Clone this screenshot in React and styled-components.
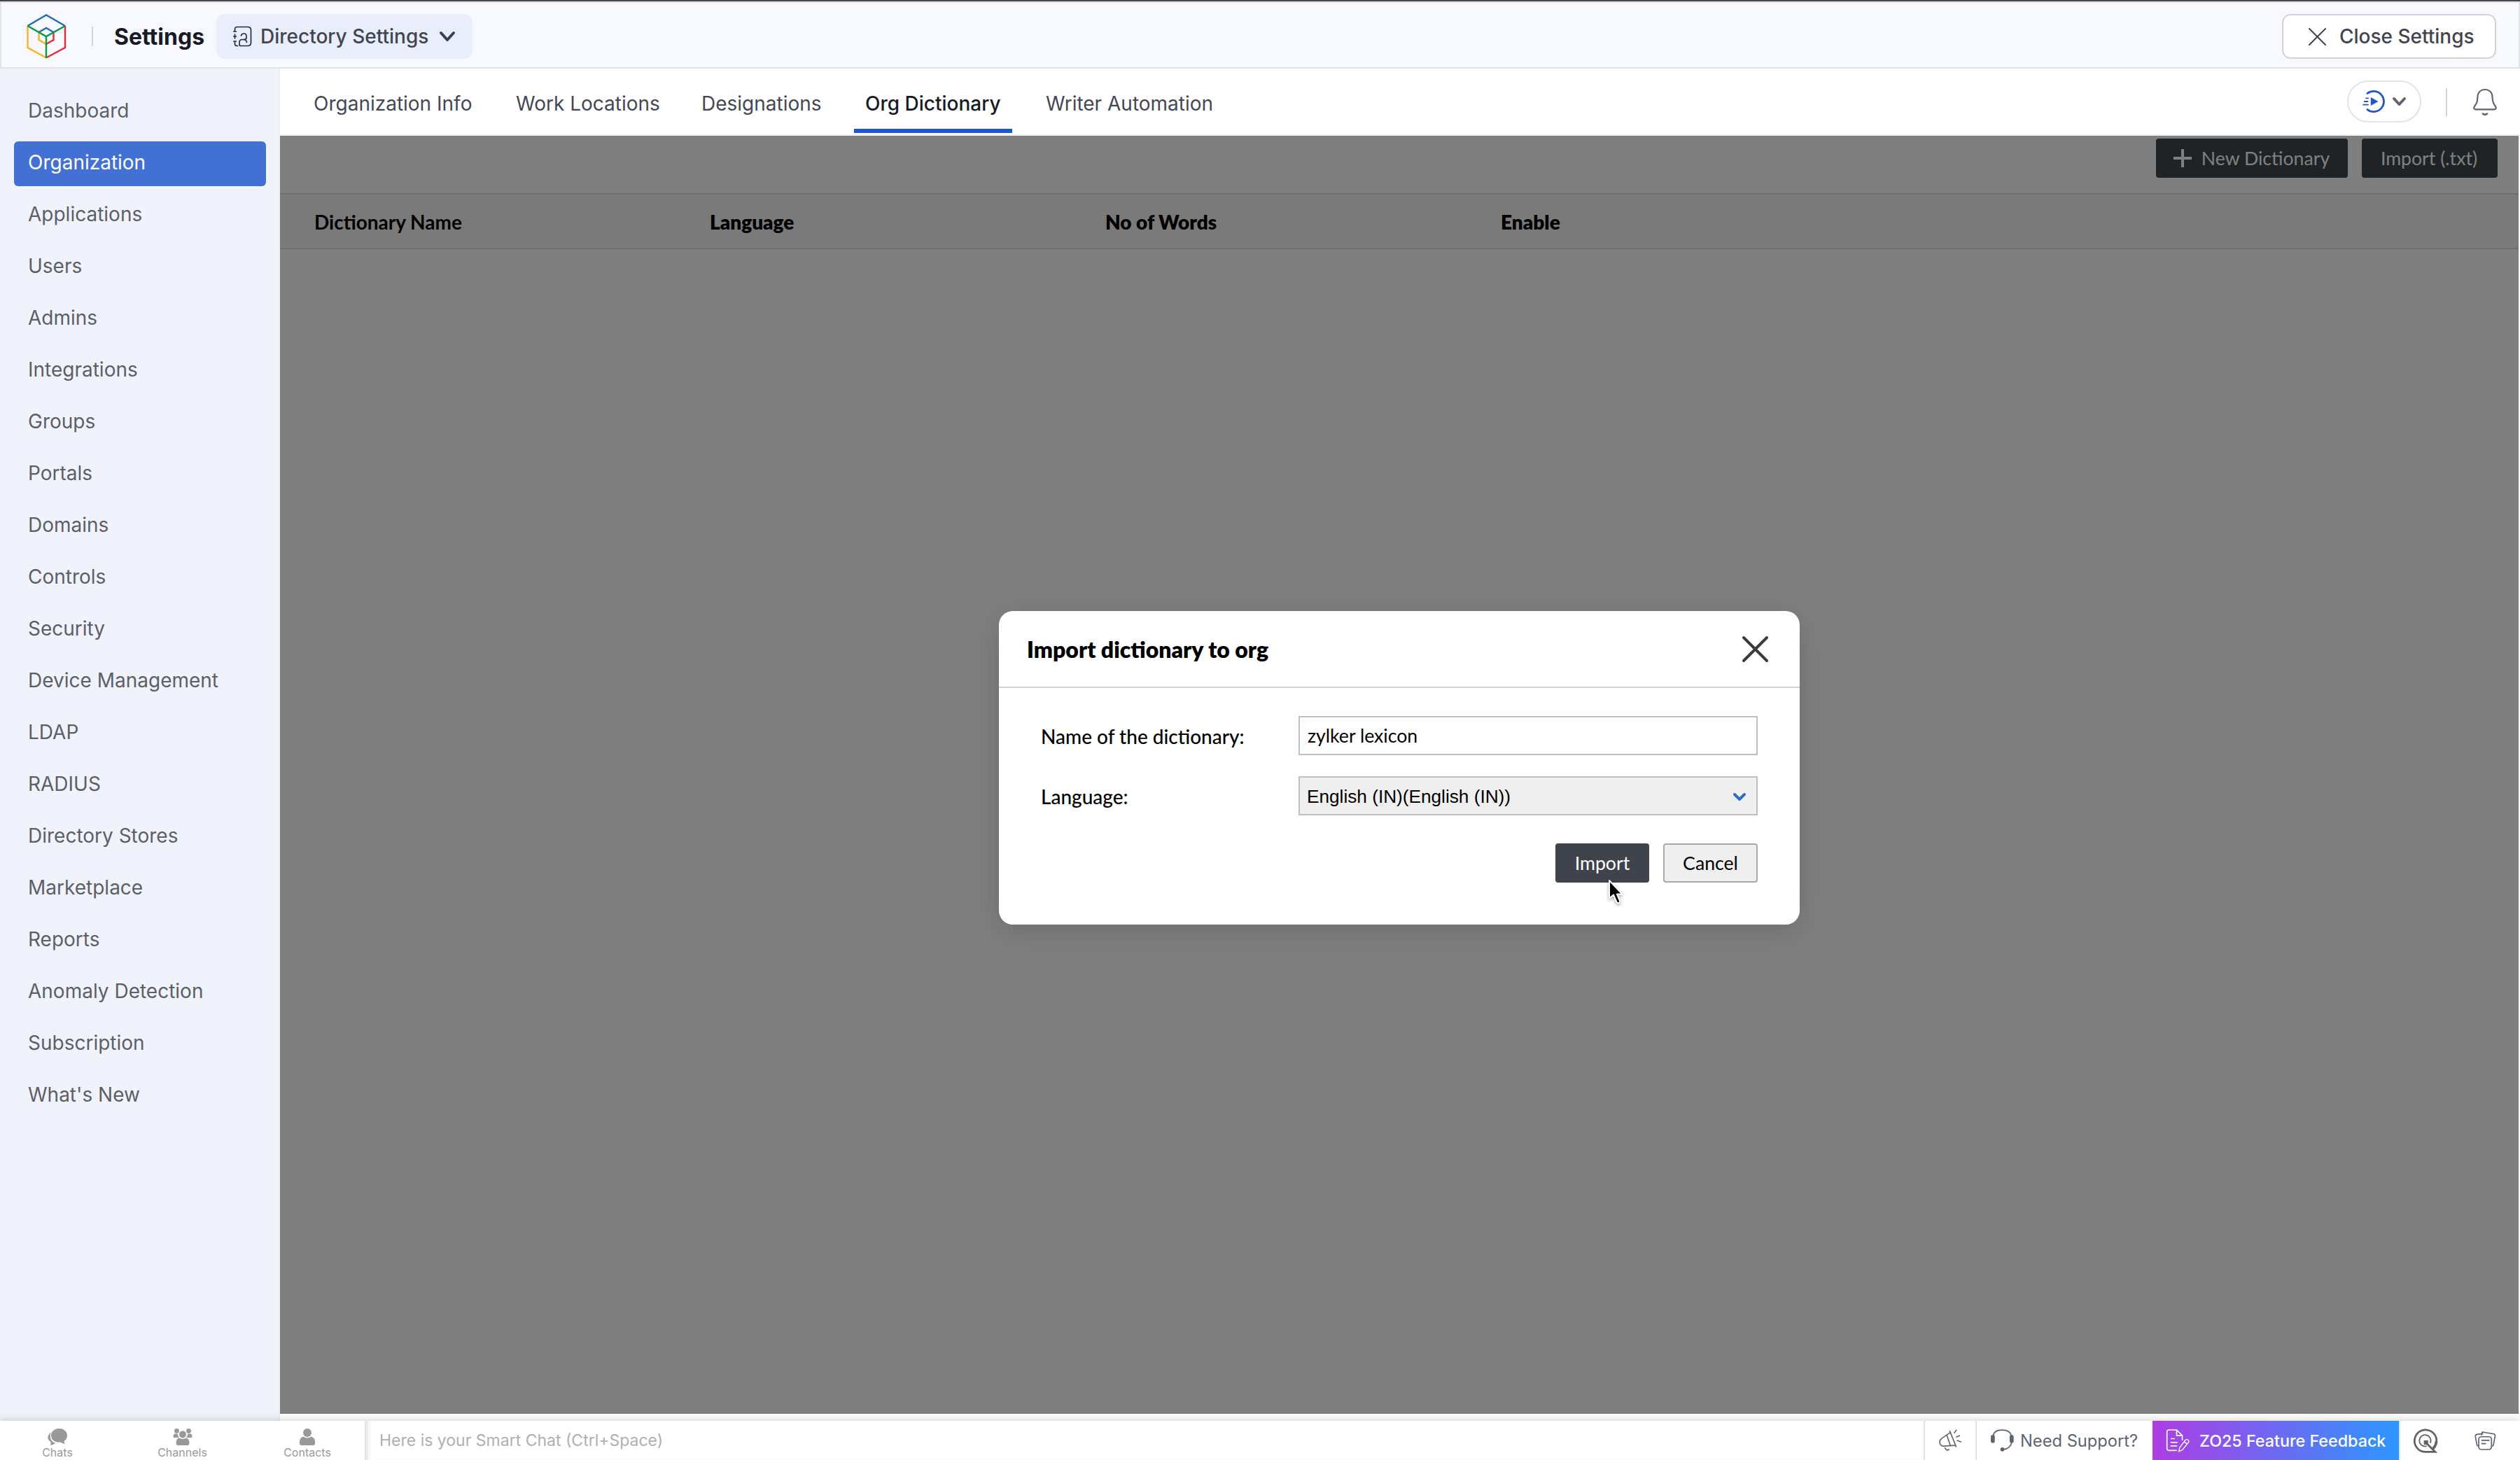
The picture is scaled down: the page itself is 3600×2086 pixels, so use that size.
import React, { useState } from 'react';
import styled, { createGlobalStyle, css } from "styled-components";

const GlobalStyle = createGlobalStyle`
  * { box-sizing: border-box; }
  body {
    margin: 0;
    background: #fff;
    font-family: Inter, "Liberation Sans", sans-serif;
  }
  button, input { font-family: inherit; margin: 0; }
  svg { display: block; flex: none; overflow: visible; }
`;

const Page = styled.div`
  width: 3600px;
  height: 2086px;
  display: flex;
  flex-direction: column;
  overflow: hidden;
  border-top: 2px solid #454545;
`;

// ---------- top bar ----------

const TopBar = styled.header`
  height: 96px;
  flex: none;
  display: flex;
  align-items: center;
  padding: 4px 32px 0 36px;
  background: #f8f9fe;
  border: 2px solid #e2e3e6;
`;

const TopDivider = styled.div`
  width: 2px;
  height: 28px;
  margin: 0 30px 0 37px;
  background: #d2d4da;
`;

const TopTitle = styled.h1`
  width: 146px;
  margin: 0;
  font-size: 32px;
  font-weight: 700;
  color: #171a26;
`;

const DirectoryButton = styled.button`
  width: 366px;
  height: 64px;
  display: flex;
  align-items: center;
  padding: 0 25px 0 24px;
  border: 0;
  border-radius: 12px;
  background: #e9eefa;
  font-size: 28px;
  font-weight: 500;
  color: #414552;

  span {
    flex: 1;
    margin-left: 12px;
    text-align: left;
    white-space: nowrap;
  }
`;

const CloseButton = styled.button`
  width: 306px;
  height: 64px;
  margin-left: auto;
  display: flex;
  align-items: center;
  gap: 19px;
  padding: 0 0 0 36px;
  border: 2px solid #d3d4d7;
  border-radius: 12px;
  background: #fff;
  font-size: 28px;
  font-weight: 500;
  color: #414552;
  white-space: nowrap;
`;

// ---------- sidebar ----------

const Body = styled.div`
  height: 1932px;
  flex: none;
  display: flex;
`;

const Sidebar = styled.nav`
  width: 400px;
  display: flex;
  flex-direction: column;
  gap: 10px;
  padding: 30px 18px 0 20px;
  background: #f0f3fc;
  border-right: 2px solid #efeff1;
`;

const SideItem = styled.div`
  height: 64px;
  flex: none;
  display: flex;
  align-items: center;
  padding: 0 0 4px 20px;
  border-radius: 6px;
  font-size: 28px;
  color: #5d5f67;
  cursor: pointer;
  ${(p) => p.$active && css`
    background: #4370d4;
    color: #fff;
  `}
`;

// ---------- content ----------

const Main = styled.main`
  flex: 1;
  display: flex;
  flex-direction: column;
`;

const TabBar = styled.div`
  height: 96px;
  flex: none;
  display: flex;
  gap: 32px;
  padding: 0 33px 0 32px;
  background: #fff;
  border-bottom: 2px solid #eeeeee;
`;

const Tab = styled.div`
  width: ${(p) => p.$width}px;
  height: 92px;
  display: flex;
  align-items: center;
  padding: 14px 0 0 16px;
  border-bottom: 6px solid ${(p) => (p.$active ? '#1d57cb' : 'transparent')};
  font-size: 28px;
  font-weight: ${(p) => (p.$active ? 500 : 400)};
  color: ${(p) => (p.$active ? '#171a26' : '#434857')};
  white-space: nowrap;
`;

const TabTools = styled.div`
  margin-left: auto;
  height: 94px;
  display: flex;
  align-items: center;
`;

const PlayPill = styled.button`
  width: 106px;
  height: 60px;
  display: flex;
  align-items: center;
  gap: 11px;
  padding: 0 0 0 20px;
  border: 2px solid #e3e4e6;
  border-radius: 30px;
  background: #fff;
`;

const ToolDivider = styled.div`
  width: 2px;
  height: 40px;
  margin: 2px 37px 0 35px;
  background: #d2d3d6;
`;

const Workspace = styled.section`
  position: relative;
  width: 3198px;
  height: 1826px;
  flex: none;
  background: #fff;
`;

const Actions = styled.div`
  height: 82px;
  display: flex;
  justify-content: flex-end;
  gap: 20px;
  padding: 4px 30px 0 0;
`;

const ActionButton = styled.button`
  width: ${(p) => p.$width}px;
  height: 56px;
  display: flex;
  align-items: center;
  justify-content: center;
  gap: 13px;
  padding: 0 2px 0 0;
  border: 0;
  border-radius: 4px;
  background: #3f474c;
  font-family: Lato, sans-serif;
  font-size: 26.67px;
  color: #fff;
  white-space: nowrap;
`;

const TableHead = styled.div`
  height: 80px;
  display: grid;
  grid-template-columns: repeat(5, 565px);
  align-items: center;
  padding: 2px 0 0 49px;
  overflow: hidden;
  background: #f4f4f4;
  border-top: 2px solid #dfdfdf;
  border-bottom: 2px solid #dfdfdf;
  font-family: Lato, sans-serif;
  font-size: 28px;
  color: #000;
`;

const HeadCell = styled.div`
  font-weight: ${(p) => (p.$light ? 700 : 800)};
`;

// ---------- dialog ----------

const Overlay = styled.div`
  position: absolute;
  inset: 0;
  display: flex;
  align-items: center;
  justify-content: center;
  padding-bottom: 20px;
  background: rgba(0, 0, 0, 0.502);
`;

const Dialog = styled.div`
  width: 1144px;
  height: 448px;
  border-radius: 20px;
  background: #fff;
  box-shadow: 0 10px 40px rgba(0, 0, 0, 0.14);
  font-family: Lato, sans-serif;
  color: #000;
`;

const DialogHeader = styled.div`
  height: 110px;
  display: flex;
  align-items: center;
  justify-content: space-between;
  padding: 0 46px 0 40px;
  border-bottom: 2px solid #d2d2d2;

  h2 {
    margin: 0;
    font-size: 32px;
    font-weight: 800;
  }
`;

const DialogBody = styled.div`
  display: flex;
  flex-direction: column;
  gap: 30px;
  padding: 40px 60px 0 60px;
`;

const FormRow = styled.label`
  height: 56px;
  display: flex;
  align-items: center;
  justify-content: space-between;
  font-size: 28px;
  font-weight: 500;

  > span {
    padding-top: 2px;
  }
`;

const field = css`
  width: 656px;
  height: 56px;
  border: 2px solid #bfbfbf;
  color: #000;
`;

const TextField = styled.input`
  ${field}
  padding: 0 11px;
  border-radius: 0;
  outline: 0;
  background: #fff;
  font-family: Lato, sans-serif;
  font-size: 26.67px;
`;

const SelectField = styled.div`
  ${field}
  display: flex;
  align-items: center;
  justify-content: space-between;
  padding: 2px 15px 0 10px;
  background: #efefef;
  font-family: "Liberation Sans", Arial, sans-serif;
  font-size: 26.2px;
  font-weight: 400;
`;

const DialogActions = styled.div`
  display: flex;
  justify-content: flex-end;
  gap: 20px;
  margin-top: 10px;
`;

const DialogButton = styled.button`
  position: relative;
  width: ${(p) => (p.$primary ? 134 : 135)}px;
  height: 56px;
  padding: 0;
  border: ${(p) => (p.$primary ? '0' : '2px solid #a9a9a9')};
  border-radius: 4px;
  background: ${(p) => (p.$primary ? '#3f444c' : '#efefef')};
  color: ${(p) => (p.$primary ? '#fff' : '#000')};
  font-family: Lato, sans-serif;
  font-size: 26.67px;
`;

const Cursor = styled.svg`
  position: absolute;
  left: 75px;
  top: 51px;
  filter: drop-shadow(0 2px 2px rgba(0, 0, 0, 0.35));
`;

// ---------- bottom bar ----------

const BottomBar = styled.footer`
  position: relative;
  height: 56px;
  flex: none;
  display: flex;
  background: #fff;
  box-shadow: 0 0 12px rgba(0, 0, 0, 0.2);
`;

const ChatTabs = styled.div`
  width: 521px;
  display: flex;
  gap: 106.5px;
  padding: 11px 0 0 46px;
`;

const ChatTab = styled.div`
  width: 72px;
  flex: none;
  display: flex;
  flex-direction: column;
  align-items: center;
  gap: 2px;
  font-size: 16px;
  line-height: 16px;
  color: #999;
`;

const SmartChat = styled.div`
  flex: 1;
  display: flex;
  align-items: center;
  padding-left: 21px;
  box-shadow: inset 8px 0 6px -4px rgba(0, 0, 0, 0.13);
  font-size: 23px;
  color: #b0b0b0;
`;

const BarCell = styled.div`
  width: ${(p) => p.$width}px;
  display: flex;
  align-items: center;
  padding-left: ${(p) => p.$pad}px;
  border-left: 2px solid ${(p) => (p.$line ? '#e0e1e4' : 'transparent')};
  font-size: 23.7px;
  color: #5f6472;
  white-space: nowrap;

  span {
    margin-left: 9px;
  }
`;

const Feedback = styled.div`
  width: 352px;
  display: flex;
  align-items: center;
  gap: 14px;
  padding-left: 20px;
  background: linear-gradient(90deg, #ae3ce4, #2c97ff);
  font-size: 23.3px;
  font-weight: 500;
  color: #fff;
  white-space: nowrap;
`;

// ---------- icons ----------

function Logo() {
  return (
    <svg width="56" height="64" fill="none" strokeWidth="2.4">
      <path d="M17.5 26 V37 L28 43" stroke="#f9b21d" />
      <path d="M38.5 26 V37 L28 43" stroke="#ea2a2f" />
      <path d="M17.5 26 L28 20 L38.5 26" stroke="#226db4" />
      <path d="M1.5 17 V48 L28 62.5" stroke="#f9b21d" />
      <path d="M55 17 V48 L28 62.5" stroke="#ea2a2f" />
      <path d="M1.5 17 L28 1.5 L55 17" stroke="#226db4" />
      <path d="M1.5 17 L28 32 L55 17 M28 32 V63" stroke="#069948" />
    </svg>
  );
}

function DirectoryIcon() {
  return (
    <svg width="27" height="30" fill="none" stroke="#2b2f3c" strokeWidth="1.7" strokeLinecap="round">
      <path d="M2.5 8 V5 Q2.5 1.5 6 1.5 H21 Q25.5 1.5 25.5 6 V24 Q25.5 28.5 21 28.5 H11 Q9 28.5 9 26.5 V23.5 Q9 19.5 13 19.5 H16 Q19 19.5 19 16.5 V14.5 Q19 11 15.5 11 Q12 11 11.5 14" />
      <path d="M2.5 12 V18 M2.5 22 V26 Q2.5 28.5 6.5 28.5 M0.8 8 H4.4 M0.8 15 H4.4 M0.8 22 H4.4" />
      <path d="M15 19.5 Q19.5 20 19.5 23.5" />
    </svg>
  );
}

function Chevron({ width, height, stroke, weight }) {
  return (
    <svg width={width} height={height} fill="none" stroke={stroke} strokeWidth={weight} strokeLinecap="round" strokeLinejoin="round">
      <path d={`M2 2 L${width / 2} ${height - 2} L${width - 2} 2`} />
    </svg>
  );
}

function Cross({ size, stroke, weight }) {
  return (
    <svg width={size} height={size} fill="none" stroke={stroke} strokeWidth={weight} strokeLinecap="round">
      <path d={`M1 1 L${size - 1} ${size - 1} M${size - 1} 1 L1 ${size - 1}`} />
    </svg>
  );
}

function PlayIcon() {
  return (
    <svg width="32" height="32" fill="none" stroke="#1d57cb" strokeWidth="2.8" strokeLinecap="round">
      <path d="M7 4.4 A14.6 14.6 0 1 1 7 27.6" />
      <path d="M5 11.3 H8 M2.8 16 H7.5 M1 20.6 H8" strokeWidth="1.8" />
      <path d="M11.8 10 L22.5 16 L11.8 22 Z" fill="#1d57cb" stroke="none" />
    </svg>
  );
}

function BellIcon() {
  return (
    <svg width="34" height="38" fill="none" stroke="#5f6472" strokeWidth="2.2" strokeLinecap="round" strokeLinejoin="round">
      <path d="M17 2 C10.5 2 6.6 6.5 6.4 13 C6.3 18.5 5.8 21.5 2.6 25 C0.2 28 1.4 30.4 4 30.4 H30 C32.6 30.4 33.8 28 31.4 25 C28.2 21.5 27.7 18.5 27.6 13 C27.4 6.5 23.5 2 17 2 Z" />
      <path d="M14 36.4 Q17 38.8 20 36.4" strokeWidth="2.6" />
    </svg>
  );
}

function PlusIcon() {
  return (
    <svg width="28" height="28" stroke="#fff" strokeWidth="4">
      <path d="M14 1 V27 M1 14 H27" />
    </svg>
  );
}

function ChatsIcon() {
  return (
    <svg width="28" height="24" fill="#999">
      <path d="M5 5 C-1 10 -1 16 4.5 19 Q4.8 21.5 4 24 Q8.5 23.5 11 20.8 C5 19 1.8 11.5 5 5 Z" />
      <path d="M16.5 0 C23 0 28 4.4 28 10 C28 13.5 26.3 16.3 23.6 18 Q23.6 20 24.6 22 Q20.5 21.6 18.3 19.6 C10.5 20.4 5 16 5 10 C5 4.4 10 0 16.5 0 Z" />
    </svg>
  );
}

function ChannelsIcon() {
  return (
    <svg width="28" height="24" fill="#999">
      <circle cx="5.5" cy="3.4" r="3.4" />
      <circle cx="22.5" cy="3.4" r="3.4" />
      <path d="M3 7.5 H6.6 Q7.2 11.6 9 13 H2 Q0.5 13 0.5 11.5 Q0.5 8 3 7.5 Z" />
      <path d="M25 7.5 H21.4 Q20.8 11.6 19 13 H26 Q27.5 13 27.5 11.5 Q27.5 8 25 7.5 Z" />
      <ellipse cx="14" cy="8.4" rx="5" ry="5.2" />
      <path d="M9 13.6 Q14 16.4 19 13.6 Q23.4 14.4 23.4 21 Q23.4 24 20.6 24 H7.4 Q4.6 24 4.6 21 Q4.6 14.4 9 13.6 Z" />
    </svg>
  );
}

function ContactsIcon() {
  return (
    <svg width="24" height="24" fill="#999">
      <ellipse cx="12" cy="6" rx="6" ry="6" />
      <path d="M6.2 11.4 Q12 15.6 17.8 11.4 Q23.2 13 23.2 20.5 Q23.2 24 20 24 H4 Q0.8 24 0.8 20.5 Q0.8 13 6.2 11.4 Z" />
    </svg>
  );
}

function MegaphoneIcon() {
  return (
    <svg width="32" height="32" viewBox="60 42 98 98" fill="none" stroke="#5f6472" strokeWidth="5" strokeLinecap="round" strokeLinejoin="round">
      <path d="M110 56 L72 82 Q60 92 64 104 Q68 116 80 116 L131 113" />
      <path d="M107 50 L135 118 M94 68 L110 114" />
      <path d="M86 124 Q92 138 104 131 M127 58 L136 46 M137 76 L150 70 M140 92 L156 97" />
    </svg>
  );
}

function HeadsetIcon() {
  return (
    <svg width="33" height="32" viewBox="282 42 98 94" fill="none" stroke="#5f6472" strokeWidth="5">
      <path d="M292 70 C294 54 308 45 330 45 C352 45 366 54 370 70 M371 95 Q366 124 336 127" />
      <rect x="282" y="66" width="17" height="34" rx="7" fill="#5f6472" stroke="none" />
      <rect x="362" y="66" width="17" height="34" rx="7" fill="#5f6472" stroke="none" />
      <circle cx="331" cy="127" r="8.5" fill="#5f6472" stroke="none" />
    </svg>
  );
}

function FeedbackIcon() {
  return (
    <svg width="33" height="33" viewBox="1036 41 98 98" fill="none" stroke="#fff" strokeWidth="5" strokeLinecap="round" strokeLinejoin="round">
      <path d="M1078 131 H1046 Q1038 131 1038 123 V52 Q1038 44 1046 44 H1079 L1103 68 V86 M1079 44 V68 H1103" />
      <path d="M1056 81 H1069 M1055 97 H1081 M1055 112 H1079" />
      <path d="M1088 136 L1092 119 L1116 87 Q1122 82 1128 87 Q1133 91 1129 97 L1104 128 Z M1111 94 L1124 104" strokeWidth="4" />
    </svg>
  );
}

function SearchIcon() {
  return (
    <svg width="35" height="35" viewBox="82 29 103 103" fill="none" stroke="#626262" strokeWidth="8">
      <path d="M168 114 A46.5 46.5 0 1 0 133 127.5 H176 L136 88" />
      <path d="M166 112 A46.5 46.5 0 0 0 179.5 81" />
      <path d="M155 90 A24 24 0 1 0 140 103" strokeWidth="5" />
      <rect x="128" y="79" width="18" height="18" fill="#626262" stroke="none" />
    </svg>
  );
}

function CardsIcon() {
  return (
    <svg width="31" height="27" viewBox="346 39 90 80" fill="none" stroke="#5f6472" strokeWidth="5" strokeLinecap="round" strokeLinejoin="round">
      <path d="M375 54 L378 42 L426 50 Q434 52 432 60 L425 97 Q423 102 418 101" />
      <path d="M380 49 L355 52 Q348 54 349 61 L355 95 Q357 102 363 101" />
      <rect x="363" y="62" width="54" height="54" rx="11" fill="#fff" />
      <path d="M376 77 H407 M376 91 H392" />
    </svg>
  );
}

const sideItems = [
  'Dashboard', 'Organization', 'Applications', 'Users', 'Admins', 'Integrations', 'Groups',
  'Portals', 'Domains', 'Controls', 'Security', 'Device Management', 'LDAP', 'RADIUS',
  'Directory Stores', 'Marketplace', 'Reports', 'Anomaly Detection', 'Subscription', "What's New",
];

const tabs = [
  { label: 'Organization Info', width: 257 },
  { label: 'Work Locations', width: 233 },
  { label: 'Designations', width: 202 },
  { label: 'Org Dictionary', width: 226 },
  { label: 'Writer Automation', width: 270 },
];

function ImportDialog() {
  const [name, setName] = useState('zylker lexicon');

  return (
    <Overlay>
      <Dialog>
        <DialogHeader>
          <h2>Import dictionary to org</h2>
          <Cross size={35} stroke="#3b3b3b" weight={4} />
        </DialogHeader>
        <DialogBody>
          <FormRow>
            <span>Name of the dictionary:</span>
            <TextField value={name} onChange={(e) => setName(e.target.value)} />
          </FormRow>
          <FormRow as="div">
            <span>Language:</span>
            <SelectField>
              English (IN)(English (IN))
              <Chevron width={18} height={11} stroke="#2b6fc7" weight={4} />
            </SelectField>
          </FormRow>
          <DialogActions>
            <DialogButton $primary>
              Import
              <Cursor width="22" height="36">
                <path
                  d="M2 2 V27.5 L8 22.5 L12.5 33 Q14 35 16.2 33.6 Q17.6 32.6 17 31 L13 21.5 H20.5 Z"
                  fill="#000"
                  stroke="#fff"
                  strokeWidth="2"
                  strokeLinejoin="round"
                />
              </Cursor>
            </DialogButton>
            <DialogButton>Cancel</DialogButton>
          </DialogActions>
        </DialogBody>
      </Dialog>
    </Overlay>
  );
}

function App() {
  const [selected, setSelected] = useState('Organization');

  return (
    <Page>
      <GlobalStyle />
      <TopBar>
        <Logo />
        <TopDivider />
        <TopTitle>Settings</TopTitle>
        <DirectoryButton>
          <DirectoryIcon />
          <span>Directory Settings</span>
          <Chevron width={22} height={14} stroke="#3c4150" weight={4} />
        </DirectoryButton>
        <CloseButton>
          <Cross size={25} stroke="#414552" weight={2} />
          Close Settings
        </CloseButton>
      </TopBar>
      <Body>
        <Sidebar>
          {sideItems.map((item) => (
            <SideItem key={item} $active={item === selected} onClick={() => setSelected(item)}>
              {item}
            </SideItem>
          ))}
        </Sidebar>
        <Main>
          <TabBar>
            {tabs.map((tab) => (
              <Tab key={tab.label} $width={tab.width} $active={tab.label === 'Org Dictionary'}>
                {tab.label}
              </Tab>
            ))}
            <TabTools>
              <PlayPill>
                <PlayIcon />
                <Chevron width={19} height={12} stroke="#5f6472" weight={4} />
              </PlayPill>
              <ToolDivider />
              <BellIcon />
            </TabTools>
          </TabBar>
          <Workspace>
            <Actions>
              <ActionButton $width={274}>
                <PlusIcon />
                New Dictionary
              </ActionButton>
              <ActionButton $width={194}>Import (.txt)</ActionButton>
            </Actions>
            <TableHead>
              <HeadCell $light>Dictionary Name</HeadCell>
              <HeadCell>Language</HeadCell>
              <HeadCell>No of Words</HeadCell>
              <HeadCell>Enable</HeadCell>
            </TableHead>
            <ImportDialog />
          </Workspace>
        </Main>
      </Body>
      <BottomBar>
        <ChatTabs>
          <ChatTab><ChatsIcon />Chats</ChatTab>
          <ChatTab><ChannelsIcon />Channels</ChatTab>
          <ChatTab><ContactsIcon />Contacts</ChatTab>
        </ChatTabs>
        <SmartChat>Here is your Smart Chat (Ctrl+Space)</SmartChat>
        <BarCell $width={74} $pad={20} $line><MegaphoneIcon /></BarCell>
        <BarCell $width={253} $pad={20} $line>
          <HeadsetIcon />
          <span>Need Support?</span>
        </BarCell>
        <Feedback>
          <FeedbackIcon />
          ZO25 Feature Feedback
        </Feedback>
        <BarCell $width={88} $pad={18} $line><SearchIcon /></BarCell>
        <BarCell $width={85} $pad={18}><CardsIcon /></BarCell>
      </BottomBar>
    </Page>
  );
}

export default App;
